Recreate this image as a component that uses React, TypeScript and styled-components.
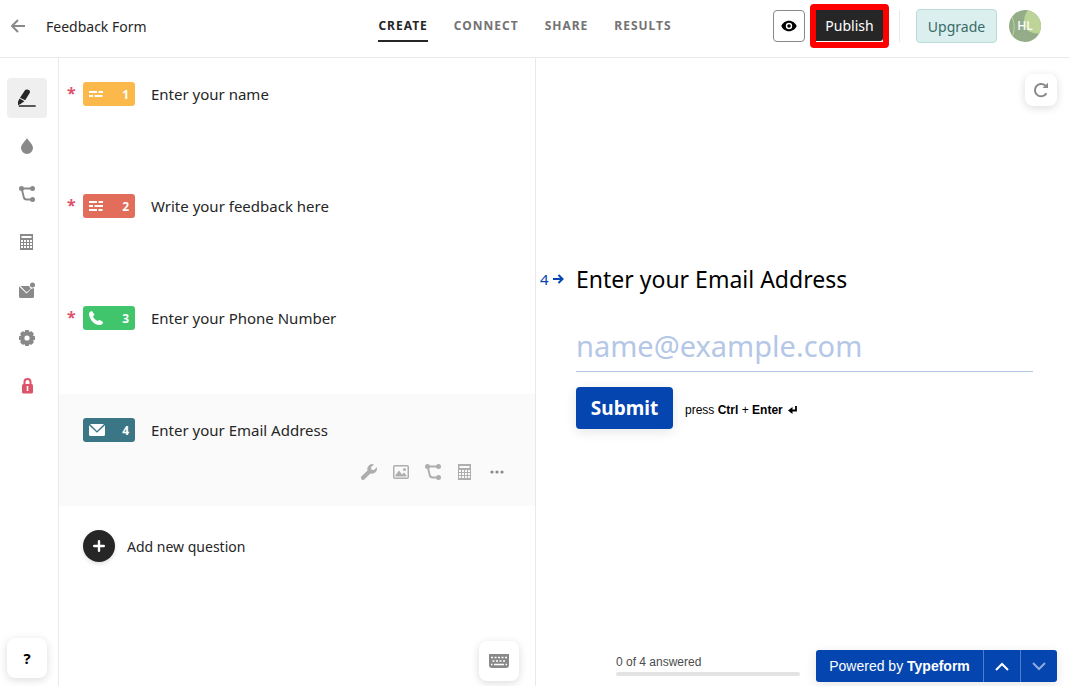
import React from "react";
import styled, { createGlobalStyle } from "styled-components";

const sans = `"Noto Sans", "Open Sans", sans-serif`;
const arial = `"Liberation Sans", Arial, sans-serif`;
const ink = "#262627";
const line = "#e9e9e9";
const blue = "#0445af";

const GlobalStyle = createGlobalStyle`
  *, *::before, *::after { box-sizing: border-box; }
  body { margin: 0; background: #fff; color: ${ink}; font-family: ${sans}; }
  button, input { font-family: inherit; }
  button { padding: 0; border: 0; background: none; color: inherit; cursor: pointer; }
  svg { display: block; flex: none; }
`;

const Page = styled.div`
  display: flex;
  flex-direction: column;
  min-height: 100vh;
`;

const Header = styled.header`
  display: grid;
  grid-template-columns: 1fr auto 1fr;
  align-items: center;
  height: 58px;
  padding: 0 29px 5px 9px;
  border-bottom: 1px solid ${line};
`;

const Breadcrumb = styled.div`
  display: flex;
  align-items: center;
  gap: 18px;
  font-size: 14px;
`;

const BackButton = styled.button`
  color: #898989;
`;

const Tabs = styled.nav`
  display: flex;
  gap: 26px;
  padding-top: 7px;
`;

const Tab = styled.a<{ $active?: boolean }>`
  padding-bottom: 5px;
  border-bottom: 2px solid ${(p) => (p.$active ? ink : "transparent")};
  color: ${(p) => (p.$active ? ink : "#737373")};
  font-size: 12px;
  font-weight: 700;
  line-height: 18px;
  letter-spacing: 1px;
  text-decoration: none;
`;

const HeaderActions = styled.div`
  display: flex;
  align-items: center;
  justify-content: flex-end;
`;

const PreviewButton = styled.button`
  display: grid;
  place-items: center;
  width: 32px;
  height: 32px;
  margin-right: 5px;
  border: 1px solid #898989;
  border-radius: 4px;
  color: #000;
`;

const Highlight = styled.div`
  padding: 0 0 1px;
  border: 6px solid #fe0000;
  border-radius: 4px;
  background: #fff;
`;

const PublishButton = styled.button`
  display: block;
  width: 67px;
  height: 31px;
  border-radius: 0 0 3px 0;
  background: ${ink};
  color: #fff;
  font-size: 14px;
`;

const Divider = styled.span`
  width: 1px;
  height: 32px;
  margin: 0 16px 0 10px;
  background: ${line};
`;

const UpgradeButton = styled.button`
  width: 81px;
  height: 34px;
  margin-right: 12px;
  border: 1px solid #b7dcda;
  border-radius: 4px;
  background: #dbefee;
  color: #396b69;
  font-size: 14px;
`;

const Avatar = styled.button`
  display: grid;
  width: 32px;
  height: 32px;
  overflow: hidden;
  border-radius: 50%;
  color: #fff;
  font-size: 12px;
  font-weight: 500;
  line-height: 32px;

  > * { grid-area: 1 / 1; }
`;

const Workspace = styled.div`
  display: grid;
  flex: 1;
  grid-template-columns: calc(50% + 1px) minmax(0, 1fr);
`;

const Editor = styled.div`
  display: flex;
  border-right: 1px solid ${line};
`;

const Sidebar = styled.aside`
  display: flex;
  flex: none;
  flex-direction: column;
  justify-content: space-between;
  width: 59px;
  padding: 20px 7px 8px;
  border-right: 1px solid ${line};
`;

const Tools = styled.div`
  display: flex;
  flex-direction: column;
  gap: 8px;
`;

const ToolButton = styled.button<{ $active?: boolean; $color?: string }>`
  display: grid;
  place-items: center;
  width: 40px;
  height: 40px;
  border-radius: 4px;
  background: ${(p) => (p.$active ? "#efefef" : "transparent")};
  color: ${(p) => p.$color ?? "#898989"};
`;

const FloatingButton = styled.button<{ $size: number }>`
  display: grid;
  place-items: center;
  width: ${(p) => p.$size}px;
  height: ${(p) => p.$size}px;
  border-radius: 8px;
  background: #fff;
  box-shadow: 0 2px 8px rgba(0, 0, 0, 0.14);
  color: #898989;
`;

const HelpButton = styled(FloatingButton)`
  color: #000;
  font-size: 15px;
  font-weight: 700;
`;

const QuestionPanel = styled.section`
  display: flex;
  flex: 1;
  flex-direction: column;
`;

const QuestionList = styled.ol`
  margin: 0;
  padding: 0;
  list-style: none;
`;

const Question = styled.li<{ $active?: boolean }>`
  display: flex;
  flex-direction: column;
  justify-content: space-between;
  height: 112px;
  padding: 24px 28px 24px 8px;
  background: ${(p) => (p.$active ? "#fafafa" : "transparent")};
`;

const QuestionLine = styled.div`
  display: flex;
  align-items: center;
`;

const Required = styled.span`
  width: 16px;
  height: 24px;
  color: #e0526a;
  font-size: 16px;
  font-weight: 700;
  line-height: 22px;
`;

const Badge = styled.span<{ $color: string }>`
  display: flex;
  align-items: center;
  justify-content: space-between;
  width: 52px;
  height: 24px;
  margin-right: 16px;
  padding: 0 6px;
  border-radius: 3px;
  background: ${(p) => p.$color};
  color: #fff;
  font-size: 12px;
  font-weight: 700;
`;

const QuestionTitle = styled.span`
  font-size: 15px;
  line-height: 24px;
`;

const QuestionActions = styled.div`
  display: flex;
  justify-content: flex-end;
  gap: 12px;
  color: #aeaeae;
`;

const ActionButton = styled.button`
  display: grid;
  place-items: center;
  width: 20px;
  height: 20px;
`;

const AddQuestion = styled.button`
  display: flex;
  align-items: center;
  align-self: flex-start;
  gap: 12px;
  margin: 24px;
  font-size: 14px;
`;

const AddCircle = styled.span`
  display: grid;
  place-items: center;
  width: 32px;
  height: 32px;
  border-radius: 50%;
  background: ${ink};
  box-shadow: 0 2px 4px rgba(0, 0, 0, 0.12);
  color: #fff;
`;

const PanelFooter = styled.div`
  display: flex;
  justify-content: flex-end;
  margin-top: auto;
  padding: 0 16px 5px;
`;

const Preview = styled.main`
  display: flex;
  flex-direction: column;
`;

const PreviewTop = styled.div`
  display: flex;
  justify-content: flex-end;
  height: 54px;
  padding: 16px 13px 0;
`;

const Form = styled.form`
  display: grid;
  flex: 1;
  grid-template-columns: 36px minmax(0, 1fr);
  align-content: center;
  padding: 0 37px 72px 4px;
`;

const Step = styled.span`
  display: flex;
  align-items: center;
  gap: 4px;
  color: ${blue};
  font-size: 15px;
`;

const FieldLabel = styled.label`
  color: #000;
  font-size: 23px;
  line-height: 36px;
`;

const FieldBody = styled.div`
  grid-column: 2;
`;

const EmailInput = styled.input`
  display: block;
  width: 100%;
  height: 48px;
  margin-top: 27px;
  padding: 0 0 4px;
  border: 0;
  border-bottom: 1px solid #b4c7e7;
  outline: none;
  background: none;
  color: ${blue};
  font-size: 29px;

  &::placeholder { color: #b4c7e7; opacity: 1; }
`;

const SubmitRow = styled.div`
  display: flex;
  align-items: center;
  gap: 12px;
  margin-top: 15px;
  color: #000;
  font-family: ${arial};
  font-size: 12px;
`;

const SubmitButton = styled.button`
  width: 97px;
  height: 42px;
  border-radius: 4px;
  background: ${blue};
  box-shadow: 0 3px 12px rgba(0, 0, 0, 0.1);
  color: #fff;
  font-family: ${sans};
  font-size: 19px;
  font-weight: 700;
`;

const Hint = styled.span`
  display: flex;
  align-items: center;
  gap: 5px;
  padding-top: 4px;
`;

const PreviewFooter = styled.footer`
  display: flex;
  align-items: flex-end;
  justify-content: flex-end;
  gap: 16px;
  padding: 0 13px 4px;
  font-family: ${arial};
`;

const Progress = styled.div`
  width: 184px;
  padding-bottom: 6px;
  color: #4c4c4c;
  font-size: 12px;
  line-height: 16px;
`;

const ProgressTrack = styled.div`
  height: 4px;
  margin-top: 2px;
  border-radius: 4px;
  background: #e3e3e3;
`;

const BrandBar = styled.div`
  display: flex;
  height: 32px;
  overflow: hidden;
  border-radius: 3px;
  background: ${blue};
  box-shadow: 0 3px 12px rgba(0, 0, 0, 0.1);
  color: #fff;
`;

const BrandLink = styled.a`
  width: 167px;
  color: #fff;
  font-size: 14px;
  line-height: 32px;
  text-align: center;
  text-decoration: none;
`;

const StepButton = styled.button`
  display: grid;
  place-items: center;
  width: 37px;
  border-left: 1px solid #4f7dc7;

  &:disabled { color: #8fabdb; }
`;

const BackIcon = () => (
  <svg width="19" height="16" viewBox="0 0 19 16" fill="none" stroke="currentColor" strokeWidth="2">
    <path d="M16 8H3.500M9 2 3 8l6 6" />
  </svg>
);

const EyeIcon = () => (
  <svg width="16" height="12" viewBox="0 0 16 12">
    <path fill="currentColor" fillRule="evenodd" d="M8 .700C4.300.700 1.500 3.200.300 6 1.500 8.800 4.300 11.300 8 11.300s6.500-2.500 7.700-5.300C14.500 3.200 11.700.700 8 .700Zm0 2.100a3.200 3.200 0 1 1 0 6.400 3.200 3.200 0 0 1 0-6.400Z" />
    <circle cx="8" cy="6" r="1.800" fill="currentColor" />
  </svg>
);

const AvatarArt = () => (
  <svg width="32" height="32" viewBox="0 0 32 32">
    <rect width="32" height="32" fill="#94ad88" />
    <path d="M19 0h13v23c-5 1-10 0-14-3-5-6-3-15 1-20Z" fill="#bdd498" />
    <path d="M2 5c4 7 4 15 1 23" fill="none" stroke="#bdd498" />
  </svg>
);

const PenIcon = () => (
  <svg width="18" height="18" viewBox="0 0 18 18" fill={ink}>
    <path d="M6.800 1.500C8-.500 13 .800 11.800 3.700L7.200 11.300 2 8.700ZM1.600 9.500 6.400 12.200 2.500 15 0 16.200V12.500Z" />
    <path d="M1.500 17h15.500" stroke={ink} strokeWidth="1.700" strokeLinecap="round" />
  </svg>
);

const DropIcon = () => (
  <svg width="12" height="16" viewBox="0 0 12 16" fill="currentColor">
    <path d="M6 0C7.500 3 12 6.200 12 10.200A6 6 0 0 1 6 16a6 6 0 0 1-6-5.800C0 6.200 4.500 3 6 0Z" />
  </svg>
);

const BranchIcon = () => (
  <svg width="16" height="16" viewBox="0 0 16 16" fill="currentColor">
    <path d="M2.500 2.500h11M2.700 2.500l2 8.500q.500 2.500 3 2.500h6" fill="none" stroke="currentColor" strokeWidth="1.900" />
    <circle cx="2.500" cy="2.500" r="2.500" />
    <circle cx="13.500" cy="2.500" r="2.500" />
    <circle cx="13.500" cy="13.500" r="2.500" />
  </svg>
);

const CalculatorIcon = () => (
  <svg width="14" height="16" viewBox="0 0 14 16" fill="currentColor">
    <path fillRule="evenodd" d="M0 0h13v16H0ZM1.500 2v2h10V2ZM1 6v2h2V6Zm3 0v2h2V6Zm3 0v2h2V6Zm3 0v2h2V6ZM1 9v2h2V9Zm3 0v2h2V9Zm3 0v2h2V9Zm3 0v2h2V9ZM1 12v2h2v-2Zm3 0v2h2v-2Zm3 0v2h2v-2Zm3 0v2h2v-2Z" />
  </svg>
);

const MailDotIcon = () => (
  <svg width="16" height="16" viewBox="0 0 16 16" fill="currentColor">
    <path d="M0 4.200 7.500 11.500 12 7l3 -1v8.500Q15 16 13.500 16h-12Q0 16 0 14.500Z" />
    <path d="M1.500 4H10.300q.200 1.700 1.500 2.700L7.500 10.200Z" />
    <circle cx="13.500" cy="3" r="2.500" />
  </svg>
);

const teeth = [0, 45, 90, 135, 180, 225, 270, 315];

const GearIcon = () => (
  <svg width="16" height="16" viewBox="0 0 16 16" fill="currentColor">
    {teeth.map((angle) => (
      <rect key={angle} x="5.800" y="0" width="4.400" height="4" rx="1" transform={`rotate(${angle} 8 8)`} />
    ))}
    <circle cx="8" cy="8" r="4.600" fill="none" stroke="currentColor" strokeWidth="4" />
  </svg>
);

const LockIcon = () => (
  <svg width="11" height="16" viewBox="0 0 11 16">
    <path d="M2.500 8V4a3 3 0 0 1 6 0v4" fill="none" stroke="currentColor" strokeWidth="2" />
    <rect y="6" width="11" height="9.500" rx="1.500" fill="currentColor" />
    <path d="M5.500 8v5" stroke="#fff" strokeWidth="1.600" />
  </svg>
);

const ShortTextIcon = () => (
  <svg width="14" height="14" viewBox="0 0 14 14" stroke="currentColor" strokeWidth="2">
    <path d="M0 5h8M9.500 5H14M0 9h4M5.500 9H13.500" />
  </svg>
);

const LongTextIcon = () => (
  <svg width="14" height="14" viewBox="0 0 14 14" stroke="currentColor" strokeWidth="2">
    <path d="M0 3h8M9.500 3H14M0 7h4M5.500 7H14M0 11h8M9.500 11H13.500" />
  </svg>
);

const PhoneIcon = () => (
  <svg width="14" height="14" viewBox="0 0 14 14" fill="currentColor">
    <path d="M1 .800 3 0 5.500 3.700 4 5.500Q5 8.500 8.500 10L10.500 8.700 14 11Q14 14 10.500 14 6 14 2.500 9.500-.500 5.500.200 2.200Q.400 1.100 1 .800Z" />
  </svg>
);

const EnvelopeIcon = () => (
  <svg width="16" height="12" viewBox="0 0 16 12" fill="currentColor">
    <path d="M0 1.200 8 8.800 16 1.200V10.500Q16 12 14.500 12h-13Q0 12 0 10.500Z" />
    <path d="M1 0h14L8 7Z" />
  </svg>
);

const WrenchIcon = () => (
  <svg width="16" height="16" viewBox="0 0 16 16" fill="currentColor">
    <path d="M13 .500A4.900 4.900 0 0 0 6.500 6.400L.500 12.300a2 2 0 0 0 3 3L9.500 9.400A4.900 4.900 0 0 0 15.700 3.200L13 6 10.300 5.500 10 3.200Z" />
  </svg>
);

const ImageIcon = () => (
  <svg width="16" height="14" viewBox="0 0 16 14">
    <rect x=".75" y=".75" width="14.500" height="12.500" rx="1" fill="none" stroke="currentColor" strokeWidth="1.500" />
    <path d="M2.500 11.500V10L6 5.500 9 9.500 11 7.500 13.500 10.500v1Z" fill="currentColor" />
    <circle cx="11.500" cy="4.500" r="1.500" fill="currentColor" />
  </svg>
);

const DotsIcon = () => (
  <svg width="14" height="4" viewBox="0 0 14 4" fill="#898989">
    <circle cx="2" cy="2" r="1.600" />
    <circle cx="7" cy="2" r="1.600" />
    <circle cx="12" cy="2" r="1.600" />
  </svg>
);

const PlusIcon = () => (
  <svg width="12" height="12" viewBox="0 0 12 12" stroke="currentColor" strokeWidth="2.400" strokeLinecap="round">
    <path d="M6 1.200v9.600M1.200 6h9.600" />
  </svg>
);

const KeyboardIcon = () => (
  <svg width="20" height="14" viewBox="0 0 20 14">
    <path d="M0 0h20v11q0 3-3 3H3q-3 0-3-3Z" fill="currentColor" />
    <path d="M2 3.500h16M3.500 7h14" stroke="#fff" strokeWidth="1.600" strokeDasharray="2 1.500" />
    <path d="M2 10.500h1.500M5 10.500h10M16.500 10.500H18" stroke="#fff" strokeWidth="1.600" />
  </svg>
);

const RefreshIcon = () => (
  <svg width="16" height="16" viewBox="0 0 16 16">
    <path d="M13.500 11.200A6.200 6.200 0 1 1 12.300 3.500" fill="none" stroke="currentColor" strokeWidth="2" />
    <path d="M15 .800V6H9.500Z" fill="currentColor" />
  </svg>
);

const ArrowIcon = () => (
  <svg width="11" height="10" viewBox="0 0 11 10" fill="none" stroke="currentColor" strokeWidth="2">
    <path d="M0 5h9.500M5.500 1l4 4-4 4" />
  </svg>
);

const ReturnIcon = () => (
  <svg width="9" height="8" viewBox="0 0 9 8">
    <path d="M8 0v4.500H3" fill="none" stroke="currentColor" strokeWidth="1.800" />
    <path d="M0 4.500 4.500 1v7Z" fill="currentColor" />
  </svg>
);

const ChevronIcon = ({ down }: { down?: boolean }) => (
  <svg width="14" height="9" viewBox="0 0 14 9" fill="none" stroke="currentColor" strokeWidth="2">
    <path d={down ? "m1 1 6 6 6-6" : "m1 8 6-6 6 6"} />
  </svg>
);

const tools = [
  { label: "Content", icon: <PenIcon />, active: true },
  { label: "Design", icon: <DropIcon /> },
  { label: "Logic", icon: <BranchIcon /> },
  { label: "Calculator", icon: <CalculatorIcon /> },
  { label: "Notifications", icon: <MailDotIcon /> },
  { label: "Settings", icon: <GearIcon /> },
  { label: "Private", icon: <LockIcon />, color: "#dd536a" },
];

const questions = [
  { title: "Enter your name", color: "#fbb94c", icon: <ShortTextIcon />, required: true },
  { title: "Write your feedback here", color: "#e26d5a", icon: <LongTextIcon />, required: true },
  { title: "Enter your Phone Number", color: "#40c56c", icon: <PhoneIcon />, required: true },
  { title: "Enter your Email Address", color: "#3a7685", icon: <EnvelopeIcon />, active: true },
];

const actions = [
  { label: "Question settings", icon: <WrenchIcon /> },
  { label: "Add image", icon: <ImageIcon /> },
  { label: "Logic jump", icon: <BranchIcon /> },
  { label: "Calculate", icon: <CalculatorIcon /> },
  { label: "More", icon: <DotsIcon /> },
];

export default function App() {
  return (
    <Page>
      <GlobalStyle />
      <Header>
        <Breadcrumb>
          <BackButton aria-label="Back"><BackIcon /></BackButton>
          <span>Feedback Form</span>
        </Breadcrumb>
        <Tabs>
          <Tab href="#create" $active>CREATE</Tab>
          <Tab href="#connect">CONNECT</Tab>
          <Tab href="#share">SHARE</Tab>
          <Tab href="#results">RESULTS</Tab>
        </Tabs>
        <HeaderActions>
          <PreviewButton aria-label="Preview"><EyeIcon /></PreviewButton>
          <Highlight><PublishButton>Publish</PublishButton></Highlight>
          <Divider />
          <UpgradeButton>Upgrade</UpgradeButton>
          <Avatar><AvatarArt /><span>HL</span></Avatar>
        </HeaderActions>
      </Header>
      <Workspace>
        <Editor>
          <Sidebar>
            <Tools>
              {tools.map((t) => (
                <ToolButton key={t.label} aria-label={t.label} $active={t.active} $color={t.color}>
                  {t.icon}
                </ToolButton>
              ))}
            </Tools>
            <HelpButton $size={40}>?</HelpButton>
          </Sidebar>
          <QuestionPanel>
            <QuestionList>
              {questions.map((q, i) => (
                <Question key={q.title} $active={q.active}>
                  <QuestionLine>
                    <Required>{q.required && "*"}</Required>
                    <Badge $color={q.color}>{q.icon}<span>{i + 1}</span></Badge>
                    <QuestionTitle>{q.title}</QuestionTitle>
                  </QuestionLine>
                  {q.active && (
                    <QuestionActions>
                      {actions.map((a) => (
                        <ActionButton key={a.label} aria-label={a.label}>{a.icon}</ActionButton>
                      ))}
                    </QuestionActions>
                  )}
                </Question>
              ))}
            </QuestionList>
            <AddQuestion>
              <AddCircle><PlusIcon /></AddCircle>
              Add new question
            </AddQuestion>
            <PanelFooter>
              <FloatingButton $size={40} aria-label="Keyboard shortcuts"><KeyboardIcon /></FloatingButton>
            </PanelFooter>
          </QuestionPanel>
        </Editor>
        <Preview>
          <PreviewTop>
            <FloatingButton $size={32} aria-label="Restart"><RefreshIcon /></FloatingButton>
          </PreviewTop>
          <Form onSubmit={(e) => e.preventDefault()}>
            <Step>4<ArrowIcon /></Step>
            <FieldLabel htmlFor="email">Enter your Email Address</FieldLabel>
            <FieldBody>
              <EmailInput id="email" type="email" placeholder="name@example.com" />
              <SubmitRow>
                <SubmitButton type="submit">Submit</SubmitButton>
                <Hint><span>press <b>Ctrl</b> + <b>Enter</b></span><ReturnIcon /></Hint>
              </SubmitRow>
            </FieldBody>
          </Form>
          <PreviewFooter>
            <Progress>
              0 of 4 answered
              <ProgressTrack />
            </Progress>
            <BrandBar>
              <BrandLink href="#typeform">Powered by <b>Typeform</b></BrandLink>
              <StepButton aria-label="Previous"><ChevronIcon /></StepButton>
              <StepButton aria-label="Next" disabled><ChevronIcon down /></StepButton>
            </BrandBar>
          </PreviewFooter>
        </Preview>
      </Workspace>
    </Page>
  );
}
